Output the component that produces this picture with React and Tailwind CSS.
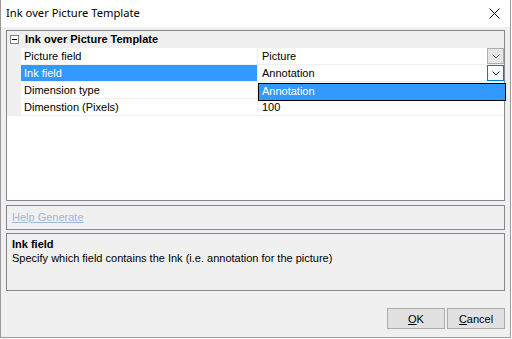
import React from 'react'

const ROWS = [
  { label: 'Picture field', value: 'Picture', button: 'plain' },
  { label: 'Ink field', value: 'Annotation', button: 'active', selected: true },
  { label: 'Dimension type', value: '' },
  { label: 'Dimenstion (Pixels)', value: '100' },
]

function Chevron() {
  return (
    <svg width="8" height="5" viewBox="0 0 8 5">
      <polyline points="0.5,0.5 4,4 7.5,0.5" fill="none" stroke="currentColor" strokeWidth="1" />
    </svg>
  )
}

function GridRow({ row }) {
  return (
    <div className="flex h-[17px] border-b border-[#f0f0f0]">
      <div className="w-[14px] shrink-0 bg-[#f0f0f0]" />
      <div
        className={
          row.selected
            ? 'w-[236px] shrink-0 bg-[#3399ff] text-white pl-[3px] pt-[2px] leading-[13px]'
            : 'w-[236px] shrink-0 bg-white text-black pl-[3px] pt-[2px] leading-[13px]'
        }
      >
        {row.label}
      </div>
      <div className="w-px shrink-0 bg-[#f0f0f0]" />
      <div className="flex-1 flex items-start bg-white pl-[4px]">
        <span className="flex-1 pt-[2px] leading-[13px]">{row.value}</span>
        {row.button === 'plain' && (
          <div className="w-[17px] h-[16px] bg-[#e5e5e5] border border-[#adadad] flex items-center justify-center text-[#707070]">
            <Chevron />
          </div>
        )}
        {row.button === 'active' && (
          <div className="w-[17px] h-[16px] bg-white border border-[#0078d7] flex items-center justify-center text-[#202020]">
            <Chevron />
          </div>
        )}
      </div>
    </div>
  )
}

export default function App() {
  return (
    <div className="w-[512px] h-[339px] bg-white font-['Liberation_Sans',sans-serif] text-[11px] text-black">
      <div className="w-[511px] h-[338px] flex flex-col border-l border-r border-b border-[#9a9a9a] bg-[#f0f0f0]">
        {/* title bar */}
        <div className="h-[27px] shrink-0 bg-white flex items-center justify-between pl-[5px] pr-[10px]">
          <span className="font-['Noto_Sans',sans-serif] text-[11.2px]">Ink over Picture Template</span>
          <svg width="11" height="11" viewBox="0 0 11 11">
            <path d="M0.5 0.5 L10.5 10.5 M10.5 0.5 L0.5 10.5" stroke="#000" strokeWidth="1" />
          </svg>
        </div>

        <div className="flex-1 flex flex-col px-[5px] pt-[3px]">
          {/* property grid */}
          <div className="relative h-[171px] shrink-0 border border-[#828790] bg-white">
            <div className="flex h-[17px] bg-[#f0f0f0]">
              <div className="w-[14px] shrink-0 flex items-center justify-center">
                <div className="w-[9px] h-[9px] border border-[#808080] bg-white flex items-center justify-center">
                  <div className="w-[5px] h-px bg-black" />
                </div>
              </div>
              <div className="pl-[4px] font-bold pt-[2px] leading-[13px]">Ink over Picture Template</div>
            </div>
            {ROWS.map((row) => (
              <GridRow key={row.label} row={row} />
            ))}

            {/* open dropdown list */}
            <div className="absolute left-[251px] top-[52px] w-[248px] h-[18px] border border-black bg-[#3399ff] text-white pl-[3px] pt-[1px] leading-[13px]">
              Annotation
            </div>
          </div>

          {/* help commands */}
          <div className="mt-[4px] h-[25px] shrink-0 border border-[#828790] flex items-center pl-[5px]">
            <span className="text-[#9db9d9] underline">Help Generate</span>
          </div>

          {/* description */}
          <div className="mt-[3px] h-[58px] shrink-0 border border-[#828790] px-[5px] pt-[3px]">
            <div className="font-bold leading-[14px]">Ink field</div>
            <div className="leading-[14px]">Specify which field contains the Ink (i.e. annotation for the picture)</div>
          </div>

          {/* buttons */}
          <div className="mt-[17px] flex justify-end gap-[2px]">
            <button className="w-[58px] h-[21px] bg-[#e1e1e1] border border-[#adadad] leading-[18px]">
              <span className="underline">O</span>K
            </button>
            <button className="w-[58px] h-[21px] bg-[#e1e1e1] border border-[#adadad] leading-[18px]">
              <span className="underline">C</span>ancel
            </button>
          </div>
        </div>
      </div>
    </div>
  )
}
